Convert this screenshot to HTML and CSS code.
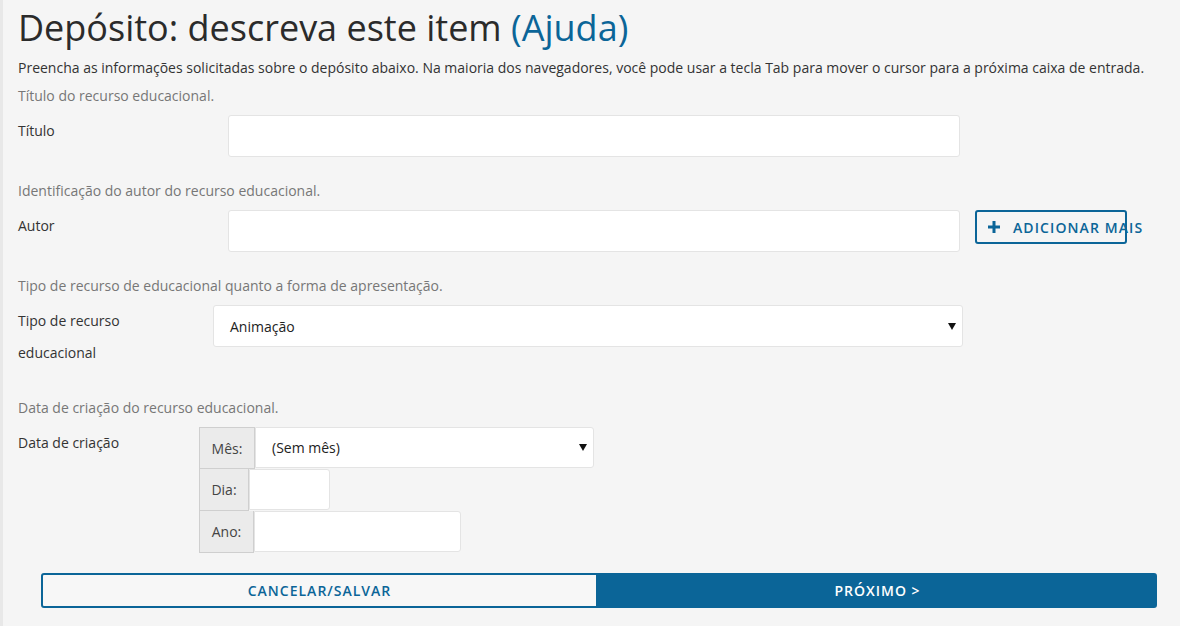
FILE: index.html
```html
<!DOCTYPE html>
<html lang="pt">
<head>
<meta charset="utf-8">
<title>Depósito: descreva este item</title>
<link rel="stylesheet" href="styles.css">
</head>
<body>
<div class="page">
  <main class="main">
    <h1 class="title">Depósito: descreva este item <a class="help-link" href="#">(Ajuda)</a></h1>
    <p class="intro">Preencha as informações solicitadas sobre o depósito abaixo. Na maioria dos navegadores, você pode usar a tecla Tab para mover o cursor para a próxima caixa de entrada.</p>

    <p class="help">Título do recurso educacional.</p>
    <div class="row row-wide">
      <label class="label">Título</label>
      <div class="input input-long"></div>
    </div>

    <p class="help">Identificação do autor do recurso educacional.</p>
    <div class="row row-wide">
      <label class="label">Autor</label>
      <div class="input input-long"></div>
      <button class="add-btn" type="button">
        <svg class="plus" width="12" height="12" viewBox="0 0 12 12"><rect x="4.5" y="0" width="3" height="12"/><rect x="0" y="4.5" width="12" height="3"/></svg>
        <span>Adicionar mais</span>
      </button>
    </div>

    <p class="help">Tipo de recurso de educacional quanto a forma de apresentação.</p>
    <div class="row row-mid">
      <label class="label label-tall">Tipo de recurso educacional</label>
      <div class="select select-long">
        <span>Animação</span>
        <svg class="caret" width="8" height="7" viewBox="0 0 8 7"><path d="M0 0H8L4 7Z"/></svg>
      </div>
    </div>

    <p class="help">Data de criação do recurso educacional.</p>
    <div class="row row-narrow">
      <label class="label">Data de criação</label>
      <div class="date">
        <div class="group">
          <span class="addon addon-mes">Mês:</span>
          <div class="select select-mes">
            <span>(Sem mês)</span>
            <svg class="caret" width="8" height="7" viewBox="0 0 8 7"><path d="M0 0H8L4 7Z"/></svg>
          </div>
        </div>
        <div class="group">
          <span class="addon addon-dia">Dia:</span>
          <div class="input input-dia"></div>
        </div>
        <div class="group">
          <span class="addon addon-ano">Ano:</span>
          <div class="input input-ano"></div>
        </div>
      </div>
    </div>

    <div class="actions">
      <button class="btn btn-cancel" type="button">Cancelar/Salvar</button>
      <button class="btn btn-next" type="button">Próximo &gt;</button>
    </div>
  </main>
</div>
</body>
</html>
```
FILE: styles.css
```css
html, body {
  margin: 0;
  padding: 0;
  background: #ffffff;
}
body {
  font-family: "Open Sans", "Noto Sans", sans-serif;
  font-size: 14px;
  color: #333333;
}
.page {
  display: flex;
  height: 626px;
}
.main {
  width: 1154px;
  background: #f5f5f5;
  border-left: 3px solid #e8e8e8;
  padding: 0 15px;
}
.title {
  margin: 8px 0 0;
  font-size: 36px;
  font-weight: 400;
  line-height: 40px;
  color: #2b2b2b;
}
.help-link {
  color: #0b6598;
  text-decoration: none;
}
.intro {
  margin: 10px 0 0;
  line-height: 20px;
}
.help {
  margin: 8px 0 0;
  line-height: 20px;
  color: #777777;
}
.row {
  display: flex;
  align-items: flex-start;
  margin-top: 9px;
  margin-bottom: 24px;
}
.label {
  flex: none;
  line-height: 32px;
  margin-bottom: 5px;
}
.row-wide .label { width: 210px; }
.row-narrow .label { width: 181px; }
.row-mid .label-tall { width: 195px; padding-right: 60px; box-sizing: border-box; }
.row + .help { margin-top: 0; }
.row-narrow { margin-bottom: 0; }
.input, .select {
  box-sizing: border-box;
  height: 42px;
  background: #ffffff;
  border: 1px solid #e4e4e4;
  border-radius: 3px;
}
.input-long { width: 732px; }
.select {
  display: flex;
  align-items: center;
  justify-content: space-between;
  padding: 0 6px 0 16px;
  color: #222222;
}
.select-long { width: 750px; }
.caret { fill: #111111; }
.add-btn {
  flex: none;
  box-sizing: border-box;
  margin-left: 15px;
  width: 152px;
  height: 34px;
  padding: 0 0 0 11px;
  display: flex;
  align-items: center;
  white-space: nowrap;
  overflow: visible;
  background: transparent;
  border: 2px solid #0b6598;
  border-radius: 3px;
  font-family: "Open Sans", "Noto Sans", sans-serif;
  font-size: 14px;
  font-weight: 600;
  letter-spacing: 1.1px;
  text-transform: uppercase;
  color: #0b6598;
}
.plus { fill: #0b6598; margin-right: 13px; flex: none; }
.date {
  display: flex;
  flex-direction: column;
}
.group {
  display: flex;
  height: 42px;
}
.addon {
  box-sizing: border-box;
  display: flex;
  align-items: center;
  justify-content: center;
  height: 42px;
  background: #ebebeb;
  border: 1px solid #cfcfcf;
  color: #444444;
}
.group + .group .addon { border-top: none; }
.addon-mes { width: 56px; }
.addon-dia { width: 50px; }
.addon-ano { width: 55px; }
.group .input, .group .select {
  border-radius: 0 3px 3px 0;
  height: 41px;
}
.select-mes { width: 339px; }
.input-dia { width: 81px; }
.input-ano { width: 207px; }
.actions {
  display: flex;
  margin: 20px 0 0 23px;
  width: 1116px;
}
.btn {
  box-sizing: border-box;
  height: 35px;
  font-family: "Open Sans", "Noto Sans", sans-serif;
  font-size: 14px;
  font-weight: 600;
  letter-spacing: 1px;
  text-transform: uppercase;
  border: 2px solid #0b6598;
}
.btn-cancel {
  width: 557px;
  background: #f7f7f7;
  color: #0b6598;
  border-radius: 3px 0 0 3px;
}
.btn-next {
  width: 559px;
  background: #0b6598;
  color: #ffffff;
  border-radius: 0 3px 3px 0;
}
```
